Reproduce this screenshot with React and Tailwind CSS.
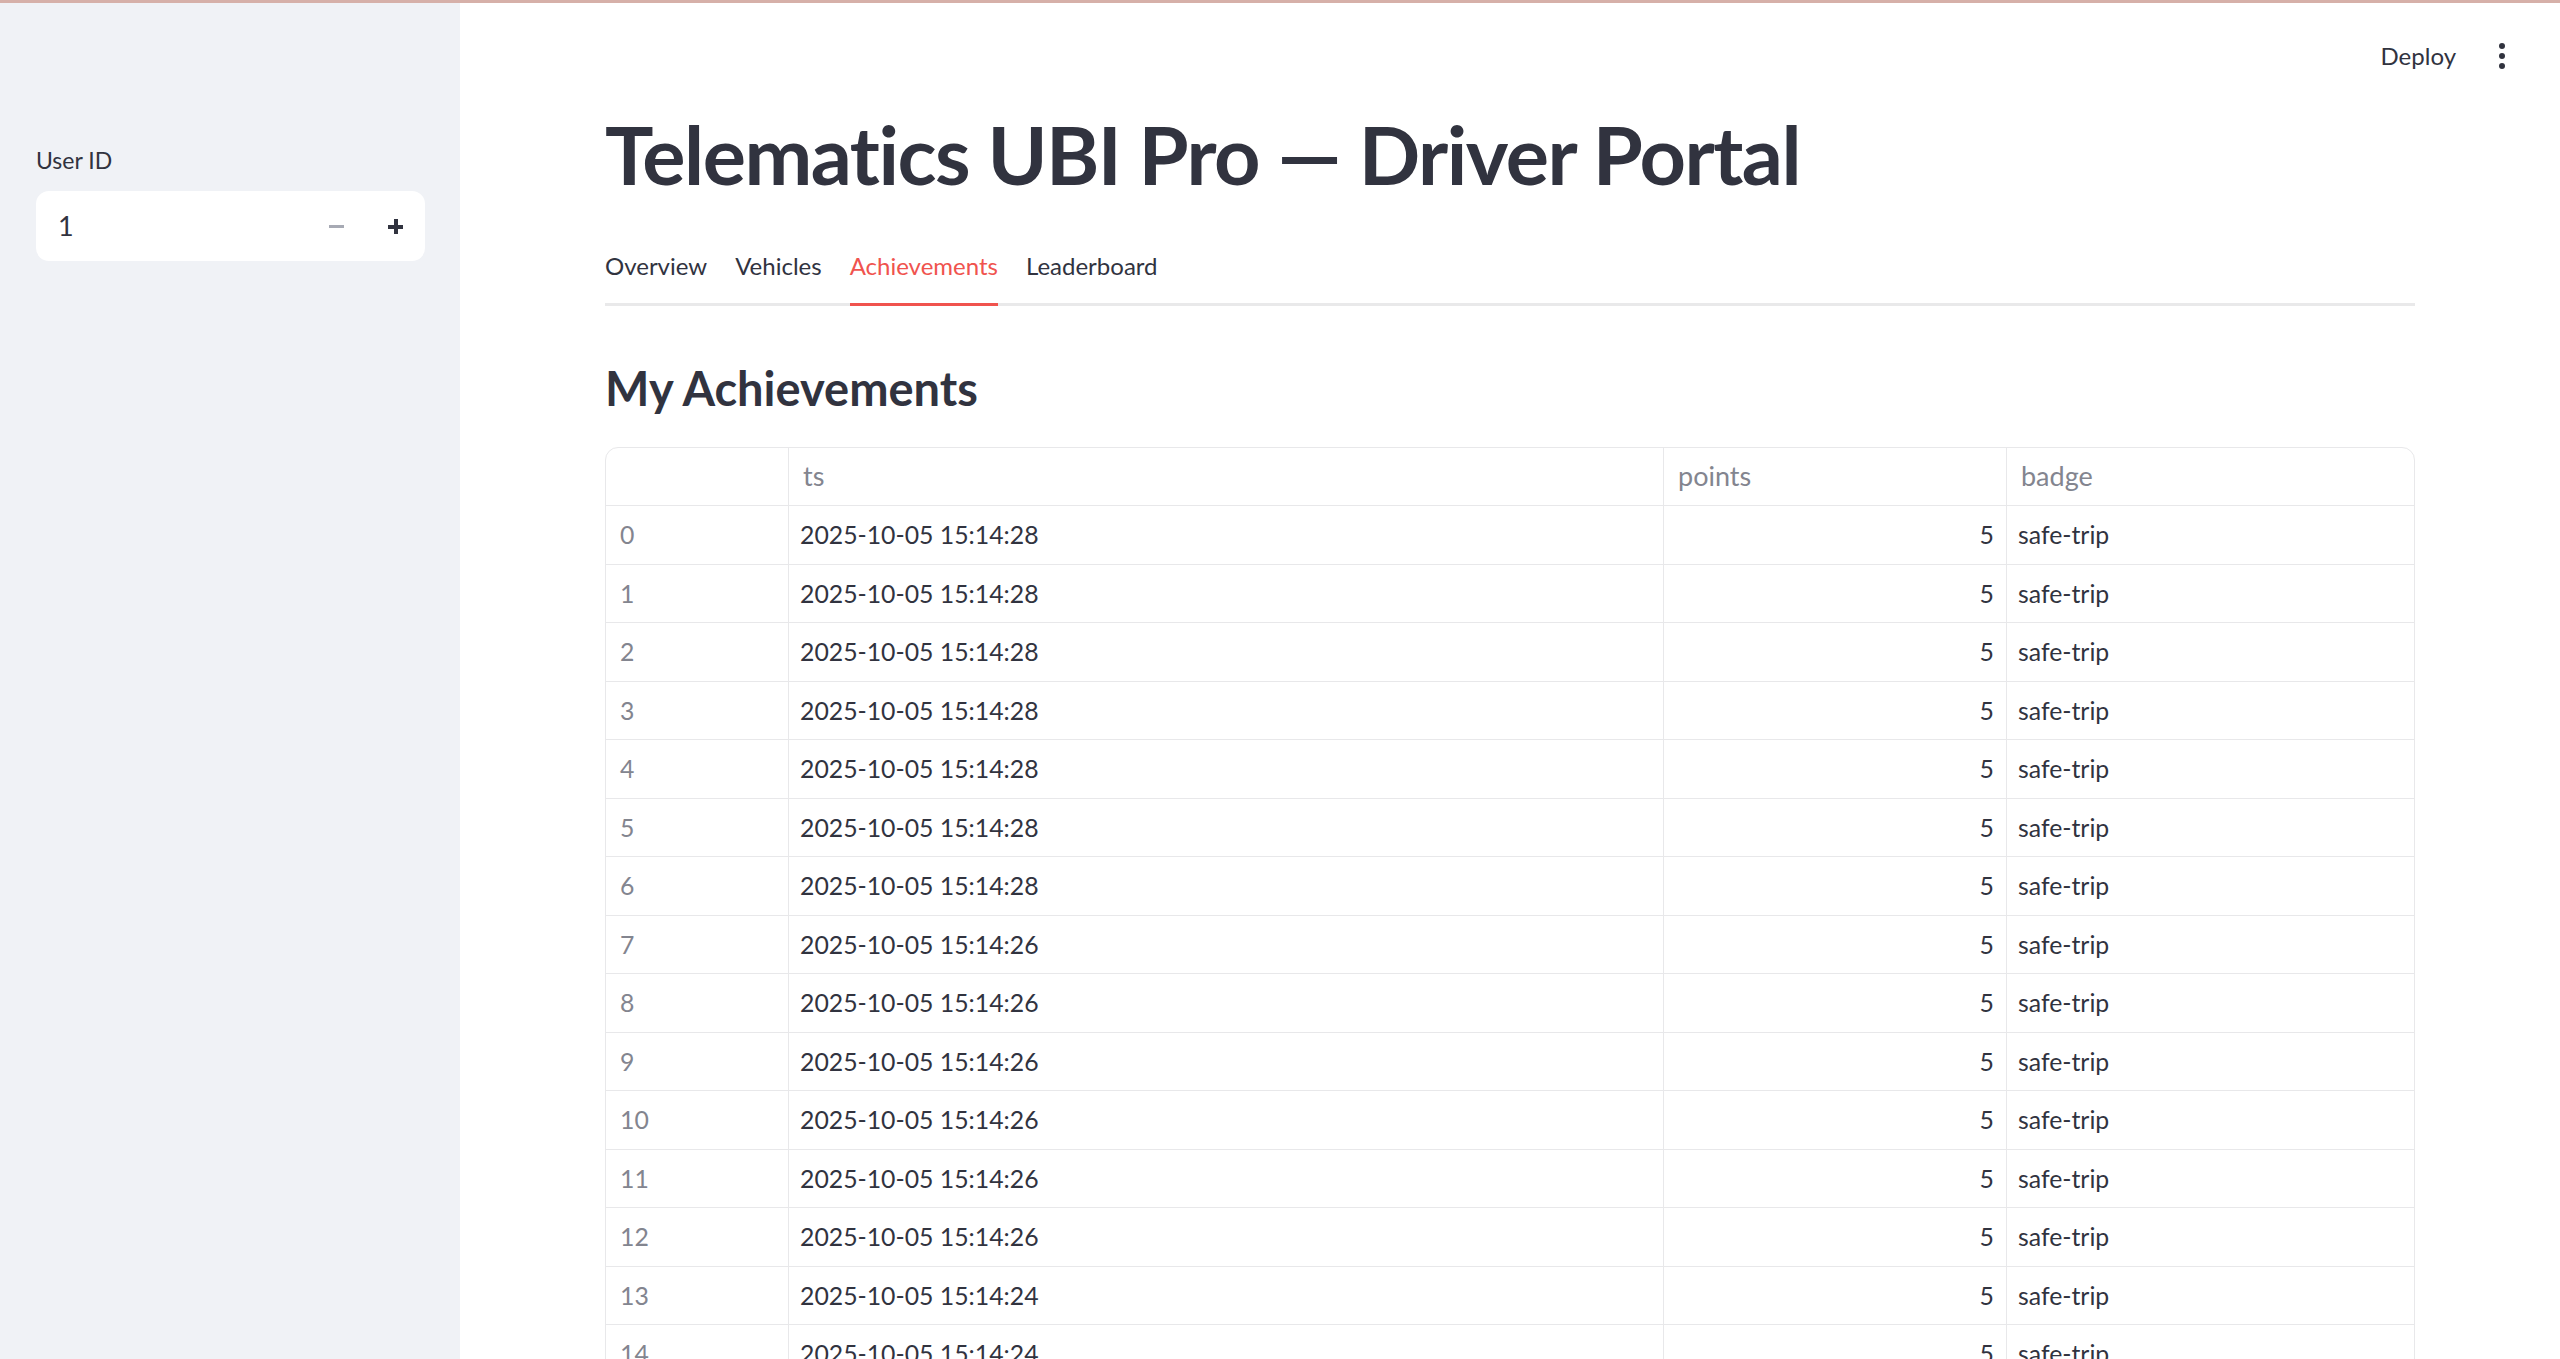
// Driver portal – achievements tab
import React from "react";

const rows = Array.from({ length: 16 }, (_, i) => ({
  idx: i,
  ts: i < 7 ? "2025-10-05 15:14:28" : i < 13 ? "2025-10-05 15:14:26" : "2025-10-05 15:14:24",
  points: 5,
  badge: "safe-trip",
}));

const tabs = ["Overview", "Vehicles", "Achievements", "Leaderboard"];

const App = () => {
  return (
    <div className="h-[1359px] w-full overflow-hidden flex flex-col bg-white font-['Lato',sans-serif] text-[#31333f]">
      <div className="h-[3px] shrink-0 bg-[#d6b0a9]" />
      <div className="flex flex-1 min-h-0">
        {/* sidebar */}
        <aside className="w-[460px] shrink-0 bg-[#f0f2f6] px-[36px] pt-[146px]">
          <label className="block text-[23px] leading-none">User ID</label>
          <div className="mt-[19px] h-[70px] w-[389px] bg-white rounded-[13px] flex items-center pl-[22px] pr-[22px]">
            <span className="text-[27px] flex-1">1</span>
            <span className="w-[15px] h-[3px] bg-[#a7aab4] mr-[44px]" />
            <span className="relative w-[15px] h-[15px]">
              <span className="absolute left-0 top-[6px] w-[15px] h-[4px] bg-[#31333f]" />
              <span className="absolute top-0 left-[5.5px] w-[4px] h-[15px] bg-[#31333f]" />
            </span>
          </div>
        </aside>

        {/* main */}
        <main className="flex-1 min-w-0 flex flex-col">
          <header className="h-[106px] shrink-0 flex items-center justify-end pr-[55px] gap-[43px]">
            <span className="text-[24px]">Deploy</span>
            <span className="flex flex-col gap-[4px]">
              <span className="w-[6px] h-[6px] rounded-full bg-[#31333f]" />
              <span className="w-[6px] h-[6px] rounded-full bg-[#31333f]" />
              <span className="w-[6px] h-[6px] rounded-full bg-[#31333f]" />
            </span>
          </header>

          <div className="px-[145px]">
            <h1 className="text-[81px] font-bold leading-none tracking-[-1.5px] pt-[4px]">
              Telematics UBI Pro — Driver Portal
            </h1>

            <div className="mt-[60px] flex gap-[28px] border-b-[3px] border-[#e9e9ea]">
              {tabs.map((t) => (
                <div
                  key={t}
                  className={
                    t === "Achievements"
                      ? "text-[24px] leading-none pb-[25px] -mb-[3px] border-b-[3px] border-[#f0534e] text-[#f0534e]"
                      : "text-[24px] leading-none pb-[25px] -mb-[3px] border-b-[3px] border-transparent"
                  }
                >
                  {t}
                </div>
              ))}
            </div>

            <h2 className="mt-[59px] text-[47px] font-bold leading-none">My Achievements</h2>

            <div className="mt-[35px] border border-[#e8e8ea] rounded-[13px] overflow-hidden text-[24.8px]">
              <div className="grid grid-cols-[183px_875px_343px_1fr] h-[58px] text-[#83858f] text-[27px]">
                <div className="border-r border-b border-[#e8e8ea]" />
                <div className="border-r border-b border-[#e8e8ea] flex items-center pl-[14px]">ts</div>
                <div className="border-r border-b border-[#e8e8ea] flex items-center pl-[14px]">points</div>
                <div className="border-b border-[#e8e8ea] flex items-center pl-[14px]">badge</div>
              </div>
              {rows.map((r) => (
                <div key={r.idx} className="grid grid-cols-[183px_875px_343px_1fr] h-[58.5px]">
                  <div className="border-r border-b border-[#e8e8ea] flex items-center pl-[14px] text-[#83858f]">
                    {r.idx}
                  </div>
                  <div className="border-r border-b border-[#e8e8ea] flex items-center pl-[11px]">{r.ts}</div>
                  <div className="border-r border-b border-[#e8e8ea] flex items-center justify-end pr-[12px]">
                    {r.points}
                  </div>
                  <div className="border-b border-[#e8e8ea] flex items-center pl-[11px]">{r.badge}</div>
                </div>
              ))}
            </div>
          </div>
        </main>
      </div>
    </div>
  );
};

export default App;
